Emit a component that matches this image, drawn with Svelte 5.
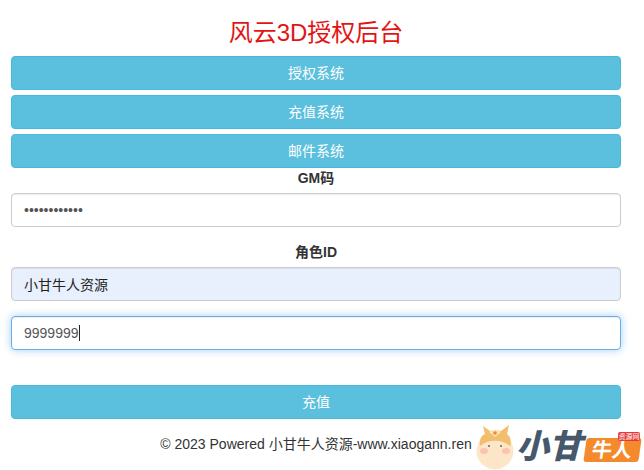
<script>
  let gmCode = "............";
  let role = "小甘牛人资源";
  let amount = "9999999";
  const systems = ["授权系统", "充值系统", "邮件系统"];
</script>

<div class="page">
  <h1>风云3D授权后台</h1>

  <div class="systems">
    {#each systems as name}
      <button class="btn">{name}</button>
    {/each}
  </div>

  <form class="form" onsubmit={(e) => e.preventDefault()}>
    <label for="gm">GM码</label>
    <input id="gm" type="password" value={gmCode} />

    <label for="role" class="second">角色ID</label>
    <input id="role" class="filled" type="text" value={role} />

    <div class="focus-wrap">
      <input class="focused" type="text" value={amount} />
      <span class="caret"></span>
    </div>

    <button class="btn submit">充值</button>
  </form>

  <p class="footer">© 2023 Powered 小甘牛人资源-www.xiaogann.ren</p>

  <div class="logo">
    <svg class="mascot" width="40" height="46" viewBox="0 0 40 46">
      <circle cx="19" cy="27" r="18.5" fill="#fde6c8" />
      <path d="M4 22 C3 15 6 11 9 10 L7 2 L14 7 C17 6 22 6 25 7 L33 1 L31 10 C34 12 36 17 34 22 C26 15 12 15 4 22 Z" fill="#f2bd6c" />
      <path d="M13 8 L19 13 L25 8 L22 6 L16 6 Z" fill="#fbe3b0" />
      <circle cx="19" cy="9" r="1.8" fill="#e98a3c" />
      <circle cx="13" cy="22" r="1" fill="#666" />
      <circle cx="25" cy="22" r="1" fill="#666" />
      <ellipse cx="8" cy="27" rx="4" ry="3" fill="#f9c4b0" />
      <ellipse cx="30" cy="27" rx="4" ry="3" fill="#f9c4b0" />
    </svg>
    <span class="logo-dark">小甘</span>
    <span class="logo-tag">
      <span class="logo-orange">牛人</span>
      <span class="logo-red">资源网</span>
    </span>
  </div>
</div>

<style>
  :global(body) {
    margin: 0;
    background: #fff;
  }

  .page {
    position: relative;
    width: 644px;
    height: 470px;
    overflow: hidden;
    padding: 0 23px 0 11px;
    box-sizing: border-box;
    font-family: "Liberation Sans", "Noto Sans CJK SC", sans-serif;
    font-size: 14px;
    color: #333;
  }

  h1 {
    margin: 0;
    padding-top: 17px;
    height: 39px;
    line-height: 31px;
    font-size: 24px;
    font-weight: 400;
    color: #e31414;
    text-align: center;
  }

  .systems {
    display: flex;
    flex-direction: column;
    gap: 5px;
  }

  .btn {
    display: block;
    width: 100%;
    height: 34px;
    padding: 0 0 2px;
    border: 1px solid #46b8da;
    border-radius: 4px;
    background: #5bc0de;
    color: #fff;
    font-family: inherit;
    font-size: 14px;
    cursor: pointer;
  }

  .form {
    display: flex;
    flex-direction: column;
  }

  label {
    display: block;
    height: 20px;
    margin: 0 0 5px;
    line-height: 20px;
    font-weight: 700;
    text-align: center;
  }

  label.second {
    margin-top: 15px;
  }

  input {
    display: block;
    width: 100%;
    height: 34px;
    box-sizing: border-box;
    padding: 6px 12px;
    border: 1px solid #ccc;
    border-radius: 4px;
    background: #fff;
    color: #555;
    font-family: inherit;
    font-size: 14px;
    box-shadow: inset 0 1px 1px rgba(0, 0, 0, 0.075);
    outline: none;
  }

  .filled {
    background: #e8f0fe;
    color: #222;
  }

  .focus-wrap {
    position: relative;
    margin-top: 15px;
  }

  .focused {
    border-color: #66afe9;
    box-shadow: inset 0 1px 1px rgba(0, 0, 0, 0.075), 0 0 8px rgba(102, 175, 233, 0.6);
  }

  .caret {
    position: absolute;
    left: 68px;
    top: 9px;
    width: 1px;
    height: 16px;
    background: #222;
  }

  .submit {
    margin-top: 35px;
  }

  .footer {
    margin: 15px 0 0;
    line-height: 20px;
    text-align: center;
    color: #333;
  }

  .logo {
    position: absolute;
    left: 476px;
    top: 424px;
    width: 168px;
    height: 46px;
    display: flex;
    align-items: flex-start;
  }

  .mascot {
    flex: none;
  }

  .logo-dark {
    margin-top: 3px;
    font-size: 33px;
    line-height: 40px;
    font-weight: 900;
    font-style: italic;
    color: #46586c;
    white-space: nowrap;
  }

  .logo-tag {
    position: relative;
    flex: none;
    width: 55px;
    height: 26px;
    margin-left: 3px;
    margin-top: 12px;
  }

  .logo-orange {
    display: block;
    height: 24px;
    margin-top: 2px;
    line-height: 24px;
    padding-left: 7px;
    border-radius: 3px;
    background: #f58a2c;
    color: #fff;
    font-size: 20px;
    font-weight: 700;
    transform: skewX(-8deg);
    white-space: nowrap;
  }

  .logo-red {
    position: absolute;
    right: 0;
    top: -4px;
    width: 22px;
    height: 9px;
    line-height: 9px;
    border-radius: 2px;
    background: #e5383b;
    color: #fff;
    font-size: 7px;
    text-align: center;
    white-space: nowrap;
  }
</style>
